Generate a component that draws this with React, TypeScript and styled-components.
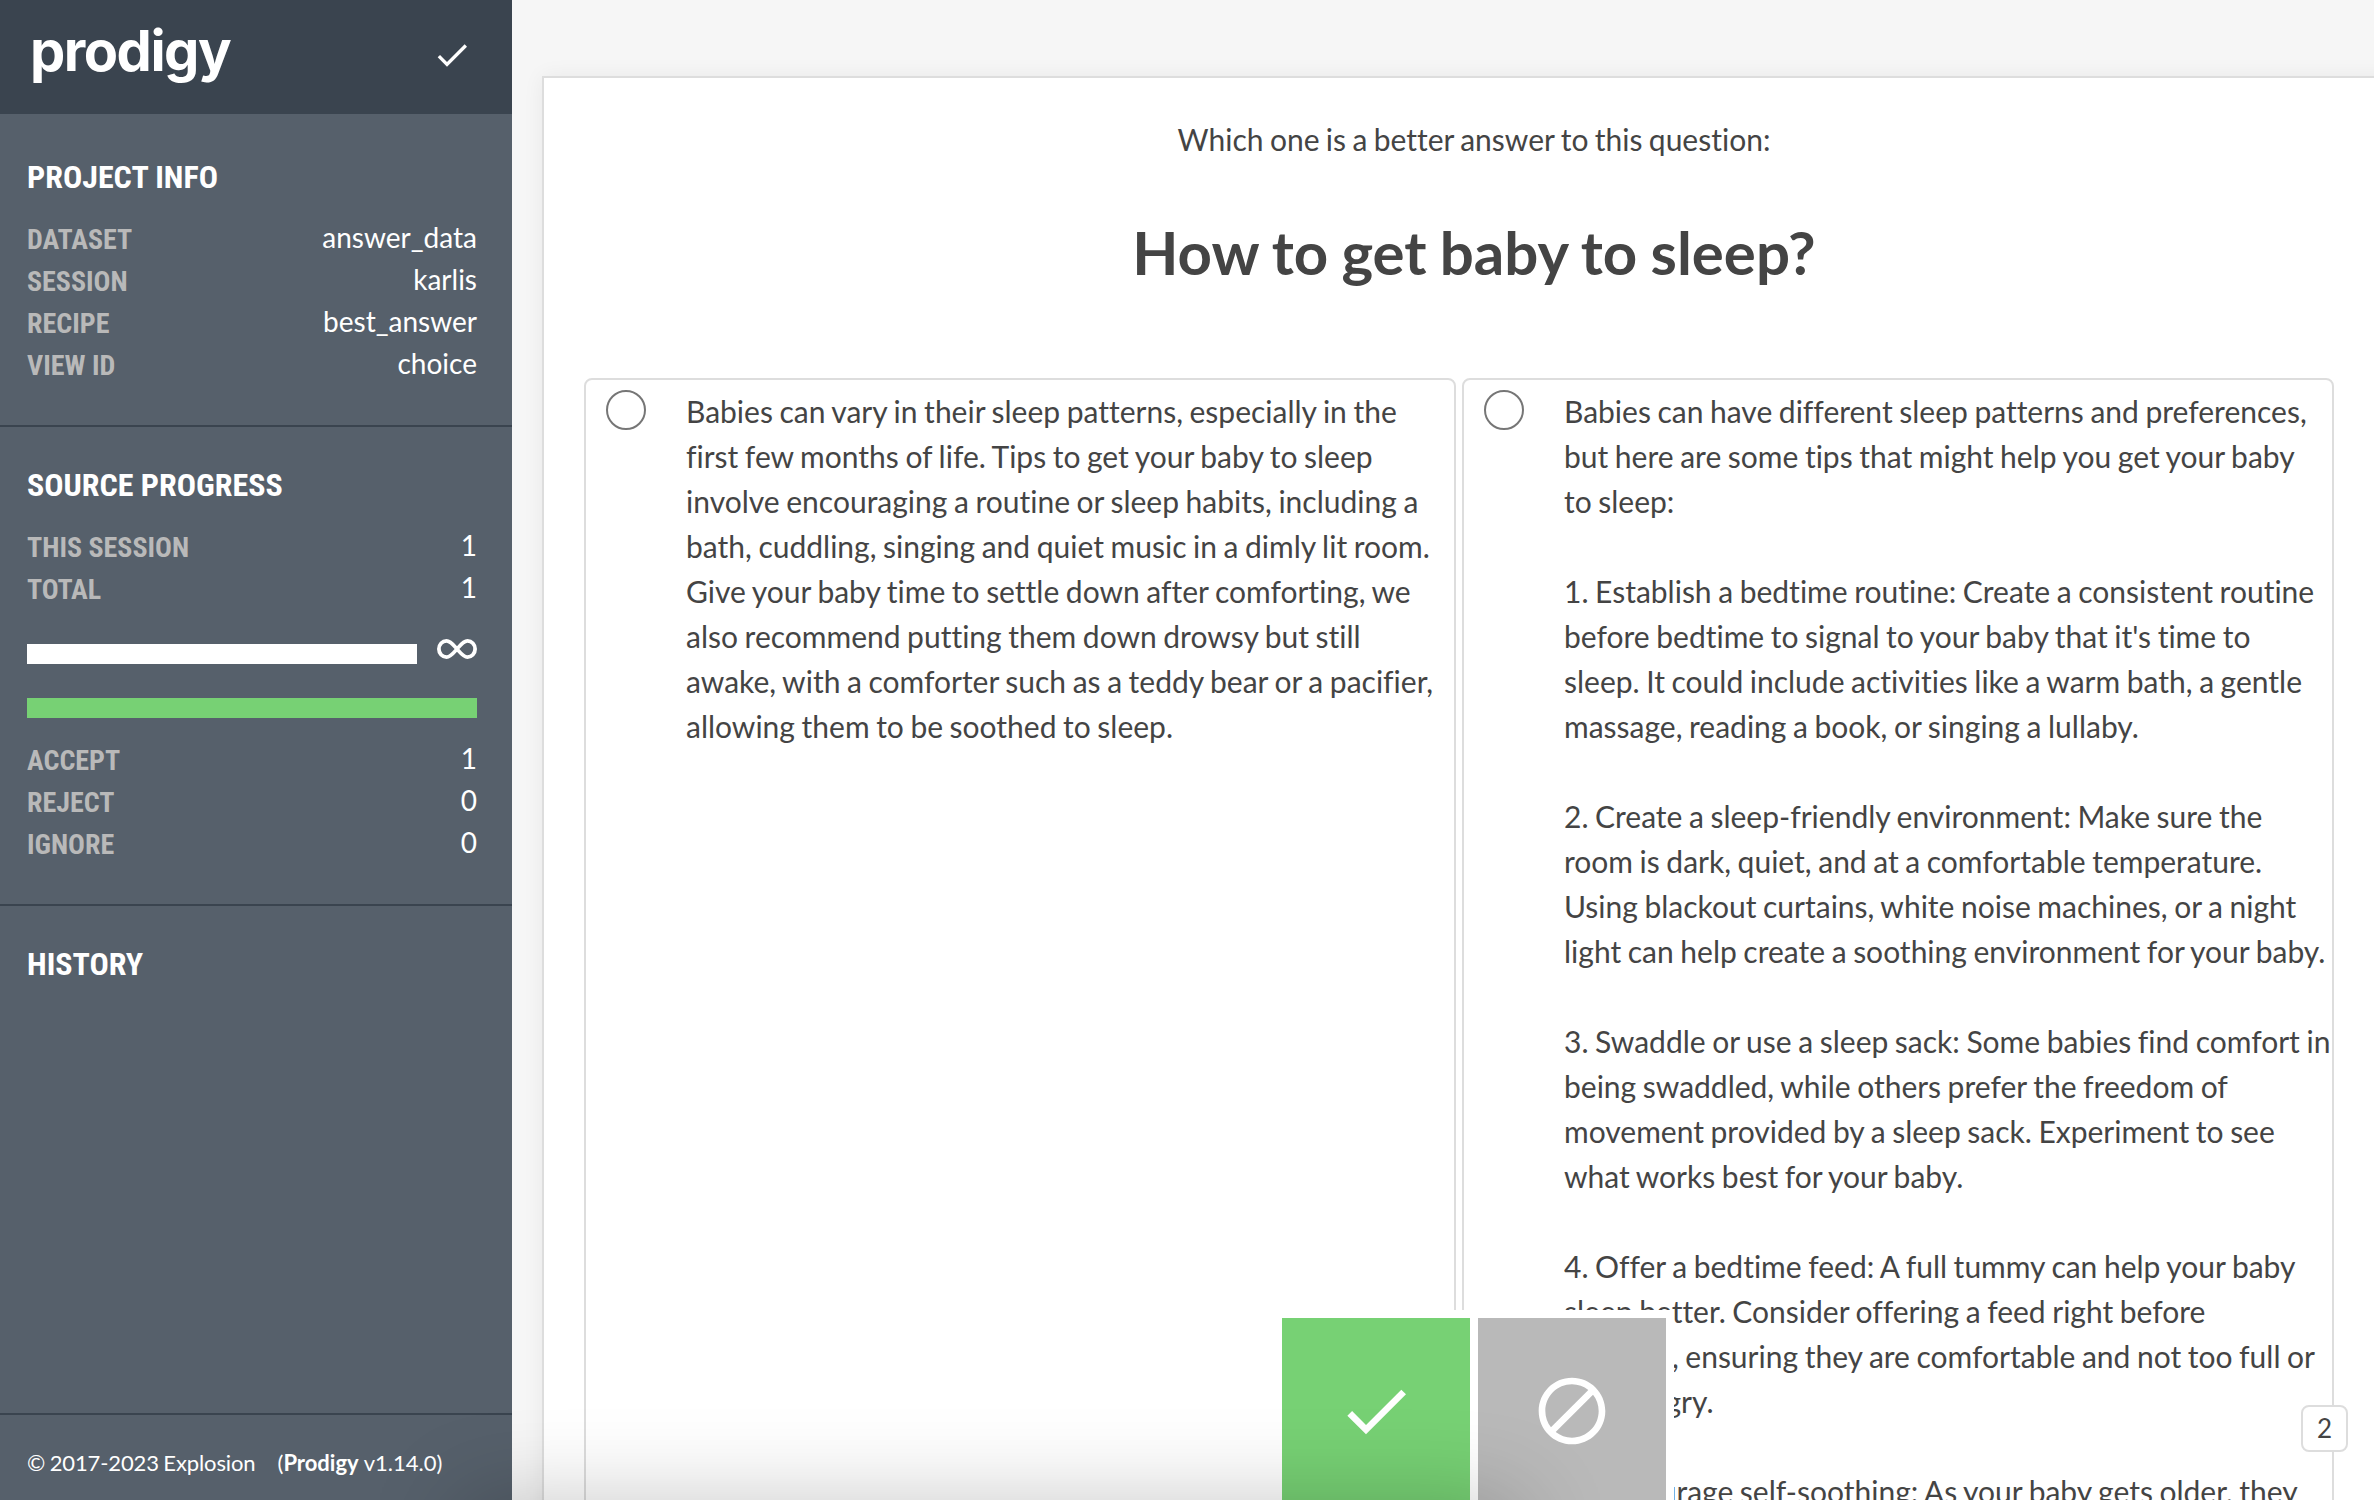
import React from "react";
import styled, { createGlobalStyle } from "styled-components";

const c = {
  header: "#3a444f",
  sidebar: "#56606b",
  label: "#b9b9b9",
  accept: "#77d174",
  ignore: "#b9b9b9",
  page: "#f6f6f6",
  border: "#dddddd",
  text: "#444444",
};

const GlobalStyle = createGlobalStyle`
  *, *::before, *::after { box-sizing: border-box; }
  html, body { margin: 0; height: 100%; overflow: hidden; }
  body {
    font-family: Lato, sans-serif;
    font-variant-ligatures: none;
    color: ${c.text};
    background: ${c.page};
  }
  h1, h2, p { margin: 0; }
`;

const Screen = styled.div`
  position: relative;
  display: flex;
  width: 2374px;
  height: 1500px;
  overflow: hidden;
  background: ${c.page};
`;

const Sidebar = styled.aside`
  display: flex;
  flex-direction: column;
  flex: none;
  width: 512px;
  height: 100%;
  background: ${c.sidebar};
  color: #fff;
`;

const SidebarHeader = styled.header`
  display: flex;
  align-items: center;
  justify-content: space-between;
  height: 114px;
  flex: none;
  padding: 0 40px 4px 30px;
  background: ${c.header};
`;

const Logo = styled.span`
  margin-top: -8px;
  font: 700 56px/72px Inter, sans-serif;
  letter-spacing: -1.5px;
`;

const Icon = styled.svg<{ $size: number }>`
  display: block;
  flex: none;
  width: ${(p) => p.$size}px;
  height: ${(p) => p.$size}px;
  fill: currentColor;
`;

const Section = styled.section<{ $top?: number; $bottom?: number; $grow?: boolean }>`
  flex: ${(p) => (p.$grow ? "1" : "none")};
  padding: ${(p) => p.$top ?? 37}px 35px ${(p) => p.$bottom ?? 40}px 27px;
  border-bottom: 2px solid ${c.header};
`;

const SectionTitle = styled.h2`
  font: 700 32px/42px "Roboto Condensed", Roboto, sans-serif;
  font-stretch: 75%;
  text-transform: uppercase;
  margin-bottom: 20px;
`;

const Row = styled.div`
  display: flex;
  justify-content: space-between;
  height: 42px;
`;

const Label = styled.span`
  font: 700 28px/44px "Roboto Condensed", Roboto, sans-serif;
  font-stretch: 75%;
  text-transform: uppercase;
  color: ${c.label};
`;

const Value = styled.span`
  font-size: 28px;
  line-height: 38px;
`;

const ProgressRow = styled.div`
  display: flex;
  align-items: flex-start;
  justify-content: space-between;
  height: 34px;
  margin: 29px 0 25px;
`;

const Bar = styled.div<{ $color: string }>`
  height: 20px;
  width: 100%;
  background: ${(p) => p.$color};
`;

const EndlessBar = styled(Bar)`
  width: 390px;
  margin-top: 5px;
`;

const Infinity = styled.svg`
  display: block;
  width: 40px;
  height: 20px;
  fill: none;
  stroke: #fff;
  stroke-width: 3.8;
`;

const Counts = styled.div`
  margin-top: 21px;
`;

const SidebarFooter = styled.footer`
  display: flex;
  gap: 22px;
  height: 85px;
  flex: none;
  padding: 0 27px;
  font-size: 22px;
  line-height: 96px;
`;

const Copyright = styled.span`
  letter-spacing: -0.12px;
  word-spacing: -1px;
`;

const Main = styled.main`
  flex: 1;
  min-width: 0;
  padding: 76px 0 0 30px;
  overflow: hidden;
`;

const Card = styled.div`
  width: 1864px;
  height: 1600px;
  padding: 39px 40px 40px;
  border: 2px solid ${c.border};
  background: #fff;
  box-shadow: 0 0 20px rgba(0, 0, 0, 0.06);
`;

const Prompt = styled.p`
  font-size: 30px;
  line-height: 45px;
  text-align: center;
  word-spacing: -1.3px;
`;

const Question = styled.h1`
  font-size: 60px;
  line-height: 90px;
  text-align: center;
  word-spacing: -1.4px;
  margin: 45px 0 81px;
`;

const Options = styled.div`
  display: grid;
  grid-template-columns: 872px 872px;
  gap: 6px;
  height: 1300px;
`;

const Option = styled.label`
  display: flex;
  align-items: flex-start;
  padding: 10px 0 10px 20px;
  border: 2px solid ${c.border};
  border-radius: 8px;
`;

const Radio = styled.span`
  flex: none;
  width: 40px;
  height: 40px;
  margin-right: 40px;
  border: 2px solid #767676;
  border-radius: 50%;
`;

const Answer = styled.span`
  flex: 1;
  margin-top: -1px;
  font-size: 30px;
  line-height: 45px;
  word-spacing: -1.1px;
  white-space: pre;
`;

const Actions = styled.div`
  position: absolute;
  left: 1274px;
  top: 1310px;
  display: flex;
  gap: 8px;
  padding: 8px;
  background: #fff;
`;

const ActionButton = styled.button<{ $color: string }>`
  display: flex;
  align-items: center;
  justify-content: center;
  width: 188px;
  height: 188px;
  padding: 0 0 2px;
  border: 0;
  color: #fff;
  background: ${(p) => p.$color};
`;

const KeyBadge = styled.span`
  position: absolute;
  left: 2301px;
  top: 1405px;
  width: 47px;
  height: 47px;
  border: 2px solid ${c.border};
  border-radius: 8px;
  background: #fff;
  font-size: 26px;
  line-height: 43px;
  text-align: center;
`;

const BottomShade = styled.div`
  position: absolute;
  left: 460px;
  top: 1500px;
  width: 1060px;
  height: 200px;
  pointer-events: none;
  box-shadow: 0 0 90px rgba(0, 0, 0, 0.22);
`;

const CheckIcon = ({ size }: { size: number }) => (
  <Icon $size={size} viewBox="0 0 24 24">
    <path d="M9 16.17L4.83 12l-1.42 1.41L9 19 21 7l-1.41-1.41z" />
  </Icon>
);

const BlockIcon = ({ size }: { size: number }) => (
  <Icon $size={size} viewBox="0 0 24 24">
    <path d="M12 2C6.48 2 2 6.48 2 12s4.48 10 10 10 10-4.48 10-10S17.52 2 12 2zM4 12c0-4.42 3.58-8 8-8 1.85 0 3.55.63 4.9 1.69L5.69 16.9C4.63 15.55 4 13.85 4 12zm8 8c-1.85 0-3.55-.63-4.9-1.69L18.31 7.1C19.37 8.45 20 10.15 20 12c0 4.42-3.58 8-8 8z" />
  </Icon>
);

const Rows = ({ items }: { items: [string, string | number][] }) => (
  <>
    {items.map(([label, value]) => (
      <Row key={label}>
        <Label>{label}</Label>
        <Value>{value}</Value>
      </Row>
    ))}
  </>
);

const answers = [
  `Babies can vary in their sleep patterns, especially in the
first few months of life. Tips to get your baby to sleep
involve encouraging a routine or sleep habits, including a
bath, cuddling, singing and quiet music in a dimly lit room.
Give your baby time to settle down after comforting, we
also recommend putting them down drowsy but still
awake, with a comforter such as a teddy bear or a pacifier,
allowing them to be soothed to sleep.`,
  `Babies can have different sleep patterns and preferences,
but here are some tips that might help you get your baby
to sleep:

1. Establish a bedtime routine: Create a consistent routine
before bedtime to signal to your baby that it's time to
sleep. It could include activities like a warm bath, a gentle
massage, reading a book, or singing a lullaby.

2. Create a sleep-friendly environment: Make sure the
room is dark, quiet, and at a comfortable temperature.
Using blackout curtains, white noise machines, or a night
light can help create a soothing environment for your baby.

3. Swaddle or use a sleep sack: Some babies find comfort in
being swaddled, while others prefer the freedom of
movement provided by a sleep sack. Experiment to see
what works best for your baby.

4. Offer a bedtime feed: A full tummy can help your baby
sleep better. Consider offering a feed right before
bedtime, ensuring they are comfortable and not too full or
too hungry.

5. Encourage self-soothing: As your baby gets older, they`,
];

export default function App() {
  return (
    <Screen>
      <GlobalStyle />
      <Sidebar>
        <SidebarHeader>
          <Logo>prodigy</Logo>
          <CheckIcon size={40} />
        </SidebarHeader>
        <Section $top={42} $bottom={39}>
          <SectionTitle>Project Info</SectionTitle>
          <Rows
            items={[
              ["Dataset", "answer_data"],
              ["Session", "karlis"],
              ["Recipe", "best_answer"],
              ["View ID", "choice"],
            ]}
          />
        </Section>
        <Section $bottom={39}>
          <SectionTitle>Source Progress</SectionTitle>
          <Rows items={[["This Session", 1], ["Total", 1]]} />
          <ProgressRow>
            <EndlessBar $color="#fff" />
            <Infinity viewBox="0 0 40 20">
              <path d="M20 10C16.5 6 13.5 1.9 9.5 1.9a7.6 8.1 0 0 0 0 16.2C13.5 18.1 16.5 14 20 10S26.5 1.9 30.5 1.9a7.6 8.1 0 0 1 0 16.2C26.5 18.1 23.5 14 20 10z" />
            </Infinity>
          </ProgressRow>
          <Bar $color={c.accept} />
          <Counts>
            <Rows items={[["Accept", 1], ["Reject", 0], ["Ignore", 0]]} />
          </Counts>
        </Section>
        <Section $grow>
          <SectionTitle>History</SectionTitle>
        </Section>
        <SidebarFooter>
          <Copyright>© 2017-2023 Explosion</Copyright>
          <span>
            (<strong>Prodigy</strong> v1.14.0)
          </span>
        </SidebarFooter>
      </Sidebar>
      <Main>
        <Card>
          <Prompt>Which one is a better answer to this question:</Prompt>
          <Question>How to get baby to sleep?</Question>
          <Options>
            {answers.map((text, i) => (
              <Option key={i}>
                <Radio />
                <Answer>{text}</Answer>
              </Option>
            ))}
          </Options>
        </Card>
      </Main>
      <KeyBadge>2</KeyBadge>
      <Actions>
        <ActionButton $color={c.accept} aria-label="Accept">
          <CheckIcon size={80} />
        </ActionButton>
        <ActionButton $color={c.ignore} aria-label="Ignore">
          <BlockIcon size={80} />
        </ActionButton>
      </Actions>
      <BottomShade />
    </Screen>
  );
}
